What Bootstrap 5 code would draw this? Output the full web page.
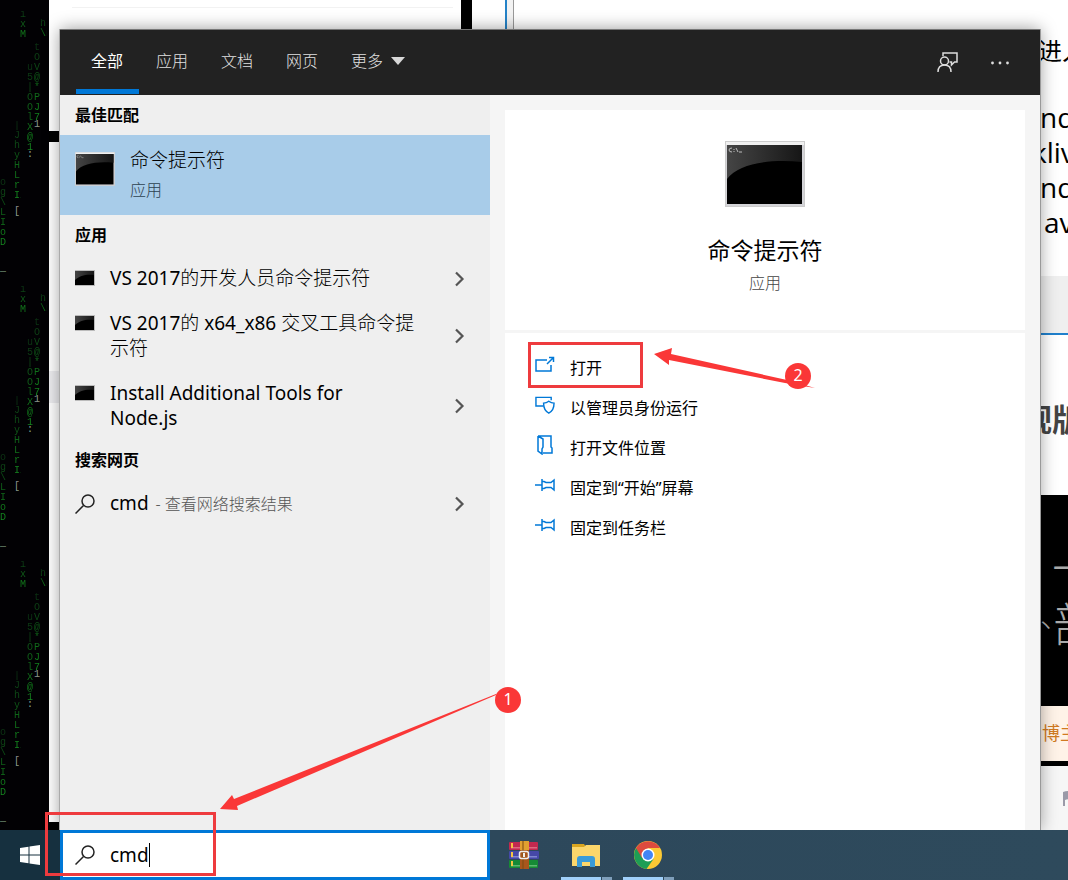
<!DOCTYPE html>
<html lang="zh-CN">
<head>
<meta charset="utf-8">
<meta name="viewport" content="width=device-width, initial-scale=1">
<title>搜索</title>
<link href="https://cdn.jsdelivr.net/npm/bootstrap@5.3.0/dist/css/bootstrap.min.css" rel="stylesheet">
<script src="https://cdn.jsdelivr.net/npm/bootstrap@5.3.0/dist/js/bootstrap.bundle.min.js"></script>
<style>
  body { font-family: "Noto Sans", "Noto Sans CJK SC", sans-serif; font-size: 16px; line-height: 24px; color: #000; background: #000; }
  svg { display: block; flex: none; }
  .light { font-weight: 300; }

  /* desktop and the windows behind the search panel */
  .desk { isolation: isolate; }
  .behind { inset: 0 0 50px 0; z-index: -1; }
  .rain { width: 49px; background: #020104; }
  .rain span { position: absolute; width: 7px; font: 10px/10px "Liberation Mono", monospace; word-break: break-all; color: transparent; background: linear-gradient(#0b2d12, #12801c 85%, #178a22); background-clip: text; -webkit-background-clip: text; }
  .win-left { left: 49px; width: 412px; top: 0; bottom: 8px; background: #fff; }
  .win-left i { display: block; background: #000; height: 11px; margin-top: 131px; }
  .win-left hr { position: absolute; top: 7px; left: 23px; right: 8px; margin: 0; color: #ccc; }
  .win-left b { display: block; height: 32px; margin-top: 229px; background: #ededf0; }
  .win-mid { left: 472px; right: 0; top: 0; bottom: 0; background: #fff; }
  .win-mid i { position: absolute; left: 33px; top: 0; bottom: 0; width: 9px; border-left: 2px solid #2583c8; border-right: 1px solid #999; background: #f3f3f3; }
  .reader { right: 0; top: 0; bottom: 0; width: 28px; font-family: "Open Sans", "Noto Sans CJK SC", sans-serif; white-space: nowrap; background: #fff; }
  .reader p { margin: 0; font-size: 28px; line-height: 35px; }
  .r-top { height: 276px; padding-top: 34px; }
  .r-top .first { font-size: 24px; height: 66px; line-height: 33px; margin-left: -2px; }
  .r-top .cut { margin-left: -8px; }
  .r-bar { height: 59px; background: #efefef; border-bottom: 2px solid #2080cc; }
  .r-head { height: 160px; padding-top: 64px; color: #444; }
  .r-head p { font-size: 31px; line-height: 40px; font-weight: 700; margin-left: -19px; }
  .r-dark { height: 211px; padding-top: 49px; background: #000; color: #aaa; font-weight: 300; }
  .r-dark p { font-size: 46px; line-height: 46px; margin-left: 12px; }
  .r-dark p + p { display: flex; margin-left: 0; padding-top: 10px; }
  .r-dark span { width: 13px; font-size: 30px; line-height: 32px; }
  .r-note { height: 60px; background: #fff3e8; color: #d17a22; border-bottom: 5px solid #000; }
  .r-note p { font-size: 18px; line-height: 55px; margin-left: 2px; }
  .r-foot { background: #f6f6f6; padding: 24px 0 0 22px; }

  /* search panel */
  .panel { margin: 29px 28px 0 60px; border-top: 1px solid #777; box-shadow: -1px 0 0 #aaa, 1px 0 0 #999, 0 0 16px rgba(0,0,0,.4); background: #f5f5f5; }
  .panel-head { height: 65px; background: #222; padding: 0 26px 0 16px; }
  .tabs-row { gap: 2px; }
  .tabs-row .nav-link { padding: 19px 15px 16px 15px; min-width: 63px; line-height: 24px; height: 65px; color: #e0e0e0; border-radius: 0; font-weight: 300; border: 0; }
  .tabs-row .nav-link.active { color: #fff; font-weight: 400; box-shadow: inset 0 -1px #222, inset 0 -6px #0078d7; background: none; }
  .head-btn { border: 0; background: none; color: #ddd; padding: 0; width: 28px; }
  .results { flex: 0 0 430px; background: #efefef; }
  .results h2 { font-size: 16px; line-height: 24px; font-weight: 700; margin: 0; padding: 8px 15px; }
  .hit { display: flex; width: 100%; border: 0; text-align: left; background: none; color: #000; font-size: 19px; line-height: 25px; padding: 11px 25px 9px 15px; gap: 15px; }
  .hit .words { flex: 1 1 0; padding-right: 15px; }
  .hit.best { background: #a8cce9; height: 80px; padding-top: 13px; }
  .hit.best small { display: block; font-size: 16px; line-height: 24px; margin-top: 5px; color: #2c4150; font-weight: 300; }
  .hit .hint { font-size: 16px; color: #555; margin-left: 2px; }
  .detail { padding: 15px 15px 0; }
  .hero { height: 220px; padding-top: 31px; background: #fff; }
  .hero h1 { font-size: 23px; line-height: 32px; margin: 27px 0 5px; font-weight: 400; }
  .hero p { color: #444; margin: 0; font-weight: 300; }
  .acts { border-top: 3px solid #f5f5f5; background: #fff; padding: 15px 0; }
  .act { display: flex; align-items: center; gap: 15px; width: 210px; height: 40px; border: 0; background: none; color: #000; padding: 0 0 0 30px; }
  .act svg { margin-bottom: 6px; color: #0078d7; }

  /* taskbar */
  .taskbar { height: 50px; background: linear-gradient(90deg, #16303f, #16303f 60px, #2d485b 490px, #2e4a5c); }
  .start { width: 60px; border: 0; background: none; padding: 0 0 0 20px; }
  .find { width: 430px; border: 3px solid #0078d7; background: #fff; padding: 0 12px; gap: 15px; }
  .find input { border: 0; outline: 0; padding: 0; font-size: 19px; line-height: 24px; background: none; width: 100%; color: #000; }
  .caret { left: 39px; top: 0; width: 1px; height: 24px; background: #000; }
  .apps { margin-left: 3px; }
  .app { width: 62px; border: 0; background: none; padding: 0; }
  .app.open::after { content: ""; position: absolute; left: 6px; bottom: 0; width: 51px; height: 3px; background: linear-gradient(90deg, #a0d0fa 40px, #2d485b 40px, #2d485b 41px, #7f9fbb 41px); }

  /* red marks */
  .frame { border: 3px solid #ee3b3e; pointer-events: none; }
  .frame-open { left: 23px; top: -6px; width: 115px; height: 46px; }
  .frame-find { left: 45px; bottom: 4px; width: 171px; height: 64px; }
  .arrow-open { left: 149px; top: -1px; }
  .arrow-find { left: 220px; bottom: 69px; }
  .pin-no { width: 26px; height: 26px; line-height: 25px; border-radius: 50%; background: #fa3737; color: #fff; text-align: center; font-size: 16px; }
  .pin-open { left: 280px; top: 15px; }
  .pin-find { left: 495px; bottom: 167px; }
</style>
</head>
<body>
<svg width="0" height="0" class="position-absolute" aria-hidden="true">
  <defs>
    <linearGradient id="gloss" x1="0" y1="0" x2="1" y2="0"><stop offset="0" stop-color="#454545"/><stop offset="1" stop-color="#161616"/></linearGradient>
    <symbol id="cmd" viewBox="0 0 80 66">
      <rect x="0.500" y="0.500" width="79" height="65" fill="#d4d4d8" stroke="#ccc"/>
      <rect x="1" y="1" width="78" height="3" fill="#f0f0f0"/>
      <rect x="2" y="4" width="75" height="59" fill="#000"/>
      <path d="M2 4h75v17C45 18 14 22 2 38z" fill="url(#gloss)"/>
      <path d="M7 7q-3 0-3 2t3 2M9 8v1M9 10v1M11 7l2 4M14 11h3" stroke="#bbb" fill="none"/>
    </symbol>
    <symbol id="cmd-s" viewBox="0 0 20 16">
      <path d="M0 0h20v16H0z" fill="#bbb"/><path d="M0 1h19v14H0z" fill="#000"/>
      <path d="M0 1h19v4C12 4 5 5 0 10z" fill="url(#gloss)"/>
    </symbol>
    <symbol id="chev" viewBox="0 0 10 16"><path d="M1 1.500l6.500 6.500-6.500 6.500" fill="none" stroke="#555" stroke-width="2.200"/></symbol>
    <symbol id="lens" viewBox="0 0 20 20"><circle cx="13" cy="7" r="6" fill="none" stroke="#222" stroke-width="1.500"/><path d="M8.500 11.500L0.500 19.500" stroke="#222" stroke-width="1.500"/></symbol>
    <symbol id="pin" viewBox="0 0 20 14"><path d="M0 7h7M7 1v12M7 3.500h2l2 1h5l3-2.500v10l-3-2.500h-5l-2 1H7" fill="none" stroke="currentColor" stroke-width="1.500"/></symbol>
  </defs>
</svg>

<div class="desk position-relative d-flex flex-column min-vh-100 overflow-hidden">
  <div class="behind position-absolute" aria-hidden="true">
    <div class="rain position-absolute top-0 bottom-0 start-0 overflow-hidden" id="rain"></div>
    <div class="win-left position-absolute"><hr><i></i><b></b></div>
    <div class="win-mid position-absolute"><i></i></div>
    <div class="reader position-absolute d-flex flex-column overflow-hidden">
      <div class="r-top">
        <p class="first">进入</p>
        <p>nd</p>
        <p class="cut">kliv</p>
        <p>nd</p>
        <p class="ms-1">av</p>
      </div>
      <div class="r-bar"></div>
      <div class="r-head"><p>观版</p></div>
      <div class="r-dark"><p>一</p><p><span>、</span>部</p></div>
      <div class="r-note"><p>博主</p></div>
      <div class="r-foot flex-grow-1"><svg width="14" height="16" viewBox="0 0 14 16"><path d="M1 16V2q6-2 13 0v8q-6-2-11 0v6z" fill="#9a9aa8"/></svg></div>
    </div>
  </div>

  <main class="panel d-flex flex-column flex-grow-1">
    <header class="panel-head d-flex justify-content-between">
      <nav class="nav tabs-row" aria-label="搜索范围">
        <a class="nav-link active" href="#">全部</a>
        <a class="nav-link" href="#">应用</a>
        <a class="nav-link" href="#">文档</a>
        <a class="nav-link" href="#">网页</a>
        <a class="nav-link d-flex gap-2" href="#">更多 <svg class="mt-2" width="14" height="8" viewBox="0 0 14 8"><path d="M0 0h14L7 8z" fill="#d8d8d8"/></svg></a>
      </nav>
      <div class="d-flex gap-4">
        <button class="head-btn" aria-label="反馈"><svg class="mx-auto" width="22" height="21" viewBox="0 0 22 21" fill="none" stroke="#ddd" stroke-width="1.500"><path d="M6 4V1h14v9h-2.500l-3 3v-3h-2"/><circle cx="7.500" cy="9" r="4"/><path d="M1 20q0-7 6.500-7t6.500 7"/></svg></button>
        <button class="head-btn" aria-label="选项"><svg class="mx-auto" width="18" height="4" viewBox="0 0 18 4" fill="#ddd"><circle cx="1.500" cy="2" r="1.400"/><circle cx="9" cy="2" r="1.400"/><circle cx="16.500" cy="2" r="1.400"/></svg></button>
      </div>
    </header>

    <div class="d-flex flex-grow-1">
      <section class="results">
        <h2>最佳匹配</h2>
        <button class="hit best">
          <svg class="mt-1" width="40" height="34" viewBox="0 0 80 66" preserveAspectRatio="none"><use href="#cmd" width="80" height="66"/></svg>
          <span class="words light">命令提示符<small>应用</small></span>
        </button>
        <h2>应用</h2>
        <button class="hit"><svg class="mt-1" width="20" height="16"><use href="#cmd-s"/></svg><span class="words">VS 2017<span class="light">的开发人员命令提示符</span></span><svg class="align-self-center" width="10" height="16"><use href="#chev"/></svg></button>
        <button class="hit"><svg class="mt-1" width="20" height="16"><use href="#cmd-s"/></svg><span class="words">VS 2017<span class="light">的</span> x64_x86 <span class="light">交叉工具命令提示符</span></span><svg class="align-self-center" width="10" height="16"><use href="#chev"/></svg></button>
        <button class="hit"><svg class="mt-1" width="20" height="16"><use href="#cmd-s"/></svg><span class="words">Install Additional Tools for<br>Node.js</span><svg class="align-self-center" width="10" height="16"><use href="#chev"/></svg></button>
        <h2>搜索网页</h2>
        <button class="hit"><svg class="align-self-center" width="20" height="20"><use href="#lens"/></svg><span class="words">cmd <span class="hint light">- 查看网络搜索结果</span></span><svg class="align-self-center" width="10" height="16"><use href="#chev"/></svg></button>
      </section>

      <section class="detail d-flex flex-column flex-grow-1">
        <div class="hero d-flex flex-column align-items-center">
          <svg width="80" height="66"><use href="#cmd"/></svg>
          <h1>命令提示符</h1>
          <p>应用</p>
        </div>
        <div class="acts flex-grow-1">
          <div class="position-relative">
            <button class="act"><svg width="20" height="18" viewBox="0 0 20 18" fill="none" stroke="currentColor" stroke-width="1.500"><path d="M12 4H1v11h15V9M12 8l6-6M14 1.500h4.500V6"/></svg>打开</button>
            <div class="frame frame-open position-absolute"></div>
            <svg class="arrow-open position-absolute" width="162" height="42" viewBox="0 0 162 42"><path d="M0 7L18 1l-1 6 116 26 28 8-30-5L15 13v5z" fill="#fa3737"/></svg>
            <span class="pin-no pin-open position-absolute">2</span>
          </div>
          <button class="act"><svg width="20" height="20" viewBox="0 0 21 20" fill="none" stroke="currentColor" stroke-width="1.500"><path d="M17 5V2H1v9h8"/><path d="M14.500 6q2.500 2 5.500 2 0 8-5.500 10.500Q9 16 9 8q3 0 5.500-2z"/></svg>以管理员身份运行</button>
          <button class="act"><svg width="20" height="20" viewBox="0 0 20 20" fill="none" stroke="currentColor" stroke-width="1.500"><path d="M3 1h13v11l1 1v5H8M3 1v15l4 3V14l1-2V4L3 1"/></svg>打开文件位置</button>
          <button class="act"><svg width="20" height="14"><use href="#pin"/></svg>固定到“开始”屏幕</button>
          <button class="act"><svg width="20" height="14"><use href="#pin"/></svg>固定到任务栏</button>
        </div>
      </section>
    </div>
  </main>

  <footer class="taskbar d-flex">
    <button class="start" aria-label="开始"><svg width="20" height="20" viewBox="0 0 20 20" fill="#fff"><path d="M0 3l8.500-1.300v7.800H0zM9.500 1.500L20 0v9.500H9.500zM0 10.500h8.500v7.800L0 17zM9.500 10.500H20V20L9.500 18.500z"/></svg></button>
    <label class="find d-flex align-items-center" for="q">
      <svg width="20" height="20"><use href="#lens"/></svg>
      <span class="position-relative flex-grow-1 d-flex"><input id="q" type="text" value="cmd" aria-label="搜索"><span class="caret position-absolute"></span></span>
    </label>
    <div class="apps d-flex">
      <button class="app position-relative" aria-label="WinRAR"><svg class="mx-auto" width="30" height="28" viewBox="0 0 30 28">
        <rect y="1" width="29" height="8" rx="1" fill="#c2294f"/><path d="M2 6h26v1.500H2z" fill="#dd6a80"/><rect y="10" width="30" height="8" rx="1" fill="#4548a8"/><path d="M2 15h26v1.500H2z" fill="#7f86d0"/><rect y="19" width="29" height="8" rx="1" fill="#168a35"/><path d="M2 24h26v1.500H2z" fill="#5fb870"/>
        <path d="M3 2v5M3 11v5M3 20v5" stroke="#f5c542" stroke-width="2"/><rect x="11" y="0" width="9" height="9" fill="#e0a030"/><rect x="11" y="9" width="9" height="19" fill="#a8561c"/><path d="M14 0v28" stroke="#7a4a10"/><rect x="10.500" y="10.500" width="9" height="7" rx="2" fill="none" stroke="#eee" stroke-width="1.500"/><path d="M15 12v4" stroke="#eee" stroke-width="2"/></svg></button>
      <button class="app open position-relative" aria-label="文件资源管理器"><svg class="mx-auto" width="28" height="24" viewBox="0 0 28 24"><path d="M0 1h12l2 3h14v19H0z" fill="#d9a520"/><path d="M0 4h12l2-2h14v21H0z" fill="#fbd66b"/><path d="M5 24v-8q0-3 3-3h12q3 0 3 3v8h-5v-5h-8v5z" fill="#3a9bd8"/></svg></button>
      <button class="app open position-relative" aria-label="Chrome"><svg class="mx-auto" width="28" height="28" viewBox="0 0 28 28"><circle cx="14" cy="14" r="14" fill="#fcc934"/><path d="M14 14L2 7a14 14 0 0 0 10.500 21l7-10z" fill="#1e9e55"/><path d="M2 7a14 14 0 0 1 24.100 0H14l-6 10z" fill="#dd4b3e"/><circle cx="14" cy="14" r="6.500" fill="#fff"/><circle cx="14" cy="14" r="5" fill="#4285f4"/></svg></button>
    </div>
  </footer>

  <div class="frame frame-find position-absolute"></div>
  <svg class="arrow-find position-absolute" width="278" height="118" viewBox="0 0 278 118"><path d="M0 116L12 102l2 4L276 1v1L17 113l1 4z" fill="#fa3737"/></svg>
  <span class="pin-no pin-find position-absolute">1</span>
</div>

<script>
  // falling-code wallpaper: [left, top, letters], repeated every 275px
  const strands = [[20,10,"ixM."],[40,19,"h\\n"],[34,43,"tOV@*PJ7"],[27,63,"u5|OOlX@1"],[14,121,"|JhyHLrI/"],[0,178,"og\\-LIoD"]];
  const tips = [[34,120,"1"],[27,150,":"],[14,207,"["],[0,264,"_"]];
  const rain = document.getElementById("rain");
  const drop = ([x, y, t], tip) => {
    const s = document.createElement("span");
    s.textContent = t;
    s.style.left = x + "px";
    s.style.top = y + "px";
    if (tip) s.style.color = "#888";
    rain.append(s);
  };
  for (let y = 0; y + 50 < innerHeight - 50; y += 275) {
    strands.forEach(([x, t, s]) => drop([x, t + y, s], false));
    tips.forEach(([x, t, s]) => drop([x, t + y, s], true));
  }
</script>
</body>
</html>
